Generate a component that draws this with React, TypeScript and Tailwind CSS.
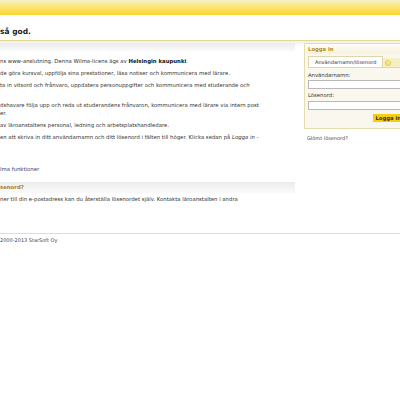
import React from 'react'

const font = { fontFamily: '"DejaVu Sans", Verdana, sans-serif' }

function Paragraph({ children, lines = 1 }: { children: React.ReactNode; lines?: number }) {
  return (
    <p className={`whitespace-nowrap leading-[8px] ${lines === 2 ? 'h-[16px]' : 'h-[8px]'}`}>{children}</p>
  )
}

function LoginBox() {
  return (
    <div className="w-[110px] shrink-0">
      <div className="border border-[#e3dcae] bg-[#faf8ee] h-[86px]">
        <div className="h-[10px] px-[3px] bg-gradient-to-b from-[#fdfcf6] to-[#f6f2de] text-[5.3px] leading-[10px] font-bold text-[#b08d1c]">
          Logga in
        </div>
        <div className="mt-[3px] ml-[3px] flex items-end h-[11px] border-b border-[#e0d8a4]">
          <div className="h-[11px] px-[6px] bg-white border border-b-0 border-[#ddd6a8] text-[5px] leading-[10px] text-[#333]">
            Användarnamn/lösenord
          </div>
          <div className="h-[9px] flex-1 bg-[#f4efc4] flex items-center pl-[2px]">
            <span className="w-[6px] h-[6px] rounded-full bg-[#f7e46a] border border-[#e2cc4c] text-[4px] leading-[4px] text-center text-white">?</span>
          </div>
        </div>
        <div className="px-[3px] pr-[10px] text-[5.3px] text-[#333]">
          <div className="h-[11px] leading-[12px] mt-[1px]">Användarnamn:</div>
          <div className="h-[9px] bg-white border border-[#b9b9b9]" />
          <div className="h-[12px] leading-[13px]">Lösenord:</div>
          <div className="h-[9px] bg-white border border-[#b9b9b9]" />
          <div className="flex justify-end mt-[4px]">
            <span className="h-[8px] px-[2px] bg-[#f4cf0b] font-bold text-[5.3px] leading-[8px] text-[#333]">Logga in</span>
          </div>
        </div>
      </div>
      <div className="mt-[5px] pl-[3px] text-[5px] leading-[8px] text-[#444]">Glömt lösenord?</div>
    </div>
  )
}

export default function App() {
  return (
    <div style={font} className="w-[400px] h-[400px] overflow-hidden bg-white text-[#333]">
      <div className="h-[15px] bg-gradient-to-b from-[#f6f0c4] via-[#fbe46a] to-[#f7d42e]" />
      <div className="h-[26px] border-b border-[#e4d98e] flex items-end pb-[3px]">
        <h1 className="text-[7.5px] font-bold leading-[10px] text-[#222] whitespace-nowrap">så god.</h1>
      </div>
      <div className="flex gap-[9px] pt-[2px] bg-gradient-to-b from-[#efefef] to-white bg-no-repeat bg-[length:100%_6px]">
        <div className="w-[295px] shrink-0 text-[5.35px] text-[#333]">
          <div className="h-[8px] bg-gradient-to-b from-[#ececec] to-[#fafafa]" />
          <div className="flex flex-col gap-[4px] pt-[6px]">
            <Paragraph>
              ns www-anslutning. Denna Wilma-licens ägs av <b className="text-[#111]">Helsingin kaupunki</b>.
            </Paragraph>
            <Paragraph>de göra kursval, uppfölja sina prestationer, läsa notiser och kommunicera med lärare.</Paragraph>
            <Paragraph lines={2}>
              ta in vitsord och frånvaro, uppdatera personuppgifter och kommunicera med studerande och
            </Paragraph>
            <Paragraph lines={2}>
              dshavare följa upp och reda ut studerandens frånvaron, kommunicera med lärare via intern post
              <br />
              er.
            </Paragraph>
            <Paragraph>av läroanstaltens personal, ledning och arbetsplatshandledare.</Paragraph>
            <Paragraph lines={2}>
              en att skriva in ditt användarnamn och ditt lösenord i fälten till höger. Klicka sedan på <i>Logga in</i> -
            </Paragraph>
          </div>
          <div className="mt-[16px] leading-[8px] text-[#3b3b6b]">lma funktioner</div>
          <div className="mt-[9px] h-[11px] bg-gradient-to-b from-[#ececec] to-[#fafafa] font-bold leading-[11px] text-[#a6841a]">
            senord?
          </div>
          <div className="mt-[2px] leading-[8px] whitespace-nowrap">
            ner till din e-postadress kan du återställa lösenordet själv. Kontakta läroanstalten i andra
          </div>
        </div>
        <LoginBox />
      </div>
      <div className="mt-[30px] border-t border-[#f0e28c] pt-[2px] text-[5px] leading-[8px] text-[#444]">
        2000-2013 StarSoft Oy
      </div>
    </div>
  )
}
